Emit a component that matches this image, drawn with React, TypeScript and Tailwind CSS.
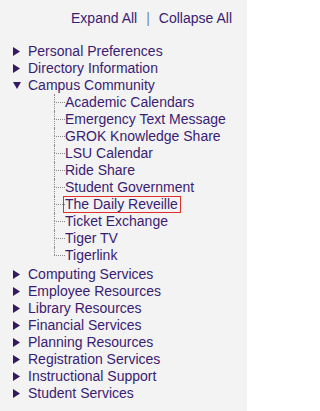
import React from 'react'

const before = ['Personal Preferences', 'Directory Information']
const subItems = [
  'Academic Calendars',
  'Emergency Text Message',
  'GROK Knowledge Share',
  'LSU Calendar',
  'Ride Share',
  'Student Government',
  'The Daily Reveille',
  'Ticket Exchange',
  'Tiger TV',
  'Tigerlink',
]
const after = [
  'Computing Services',
  'Employee Resources',
  'Library Resources',
  'Financial Services',
  'Planning Resources',
  'Registration Services',
  'Instructional Support',
  'Student Services',
]

function Arrow({ open = false }: { open?: boolean }) {
  return (
    <svg width="8" height="9" viewBox="0 0 8 9" className="shrink-0">
      {open ? (
        <polygon points="0,1 8,1 4,8" fill="#35195f" />
      ) : (
        <polygon points="0,0 7,4.5 0,9" fill="#35195f" />
      )}
    </svg>
  )
}

function TopRow({ label, open }: { label: string; open?: boolean }) {
  return (
    <li className="flex items-center h-[17px]">
      <span className="w-[28px] flex justify-start pl-[13px]">
        <Arrow open={open} />
      </span>
      <a className="text-[#3a1c72] cursor-pointer">{label}</a>
    </li>
  )
}

export default function App() {
  return (
    <div
      className="w-[247px] h-[411px] bg-[#f3f3f3] text-[14px] leading-[17px] overflow-hidden"
      style={{ fontFamily: '"Liberation Sans", Arial, sans-serif' }}
    >
      {/* Expand / collapse controls */}
      <div className="flex justify-end items-center gap-[9px] pr-[15px] pt-[10px] h-[27px] text-[#3a1c72]">
        <a className="cursor-pointer">Expand All</a>
        <span className="text-[#6f86b0]">|</span>
        <a className="cursor-pointer">Collapse All</a>
      </div>

      <ul className="mt-[16px]">
        {before.map((label) => (
          <TopRow key={label} label={label} />
        ))}
        <TopRow label="Campus Community" open />
        <li>
          <ul className="pl-[54px]">
            {subItems.map((label, i) => {
              const last = i === subItems.length - 1
              const boxed = label === 'The Daily Reveille'
              return (
                <li key={label} className="flex h-[17px]">
                  <span className="w-[11px] flex flex-col shrink-0">
                    <span className="h-[8px] border-l border-dotted border-[#8a8a8a]" />
                    <span
                      className={`flex-1 border-t border-dotted border-[#8a8a8a] ${last ? '' : 'border-l'}`}
                    />
                  </span>
                  <a
                    className={`text-[#3a1c72] cursor-pointer whitespace-nowrap ${boxed ? 'border border-[#e0302a] -ml-[2px] pl-[1px] pr-[2px] leading-[15px]' : ''}`}
                  >
                    {label}
                  </a>
                </li>
              )
            })}
          </ul>
        </li>
        <li className="h-[2px]" />
        {after.map((label) => (
          <TopRow key={label} label={label} />
        ))}
      </ul>
    </div>
  )
}
